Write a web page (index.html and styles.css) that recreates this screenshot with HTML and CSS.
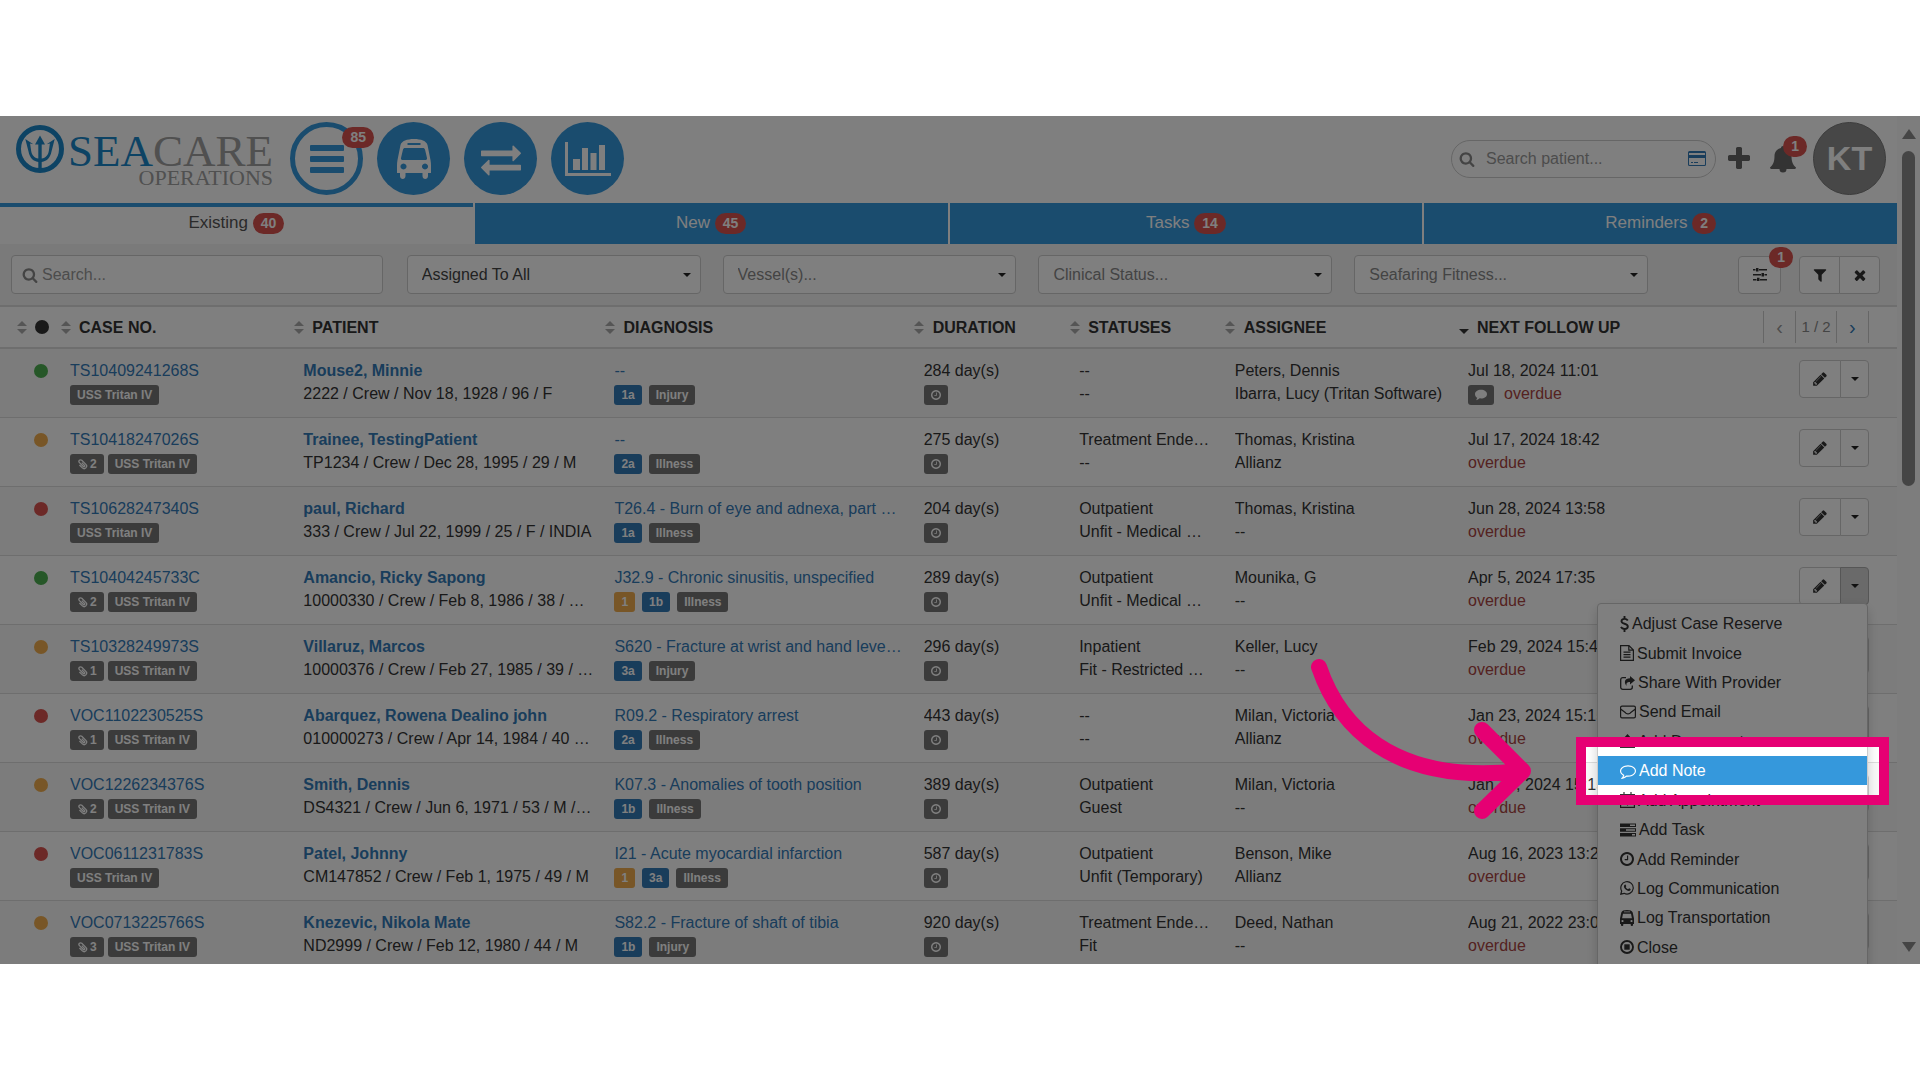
FILE: index.html
```html
<!DOCTYPE html>
<html lang="en">
<head>
  <meta charset="UTF-8" />
  <meta name="viewport" content="width=device-width, initial-scale=1.0" />
  <title>SeaCare Operations</title>
  <link rel="stylesheet" href="styles.css">
</head>
<body>

  <svg class="sprite" aria-hidden="true">
    <symbol id="i-search" viewBox="0 0 1792 1792"><path d="M1216 832q0-185-131.500-316.500t-316.500-131.500-316.500 131.500-131.500 316.500 131.500 316.500 316.500 131.500 316.500-131.500 131.500-316.500zm512 832q0 52-38 90t-90 38q-54 0-90-38l-343-342q-179 124-399 124-143 0-273.500-55.500t-225-150-150-225-55.500-273.500 55.500-273.500 150-225 225-150 273.500-55.500 273.500 55.500 225 150 150 225 55.500 273.500q0 220-124 399l343 343q37 37 37 90z"/></symbol>
    <symbol id="i-plus" viewBox="0 0 1792 1792"><path d="M1600 736v192q0 40-28 68t-68 28h-416v416q0 40-28 68t-68 28h-192q-40 0-68-28t-28-68v-416h-416q-40 0-68-28t-28-68v-192q0-40 28-68t68-28h416v-416q0-40 28-68t68-28h192q40 0 68 28t28 68v416h416q40 0 68 28t28 68z"/></symbol>
    <symbol id="i-filter" viewBox="0 0 1792 1792"><path d="M1595 295q17 41-14 70l-493 493v742q0 42-39 59-13 5-25 5-27 0-45-19l-256-256q-19-19-19-45v-486l-493-493q-31-29-14-70 17-39 59-39h1280q42 0 59 39z"/></symbol>
    <symbol id="i-times" viewBox="0 0 1792 1792"><path d="M1490 1322q0 40-28 68l-136 136q-28 28-68 28t-68-28l-294-294-294 294q-28 28-68 28t-68-28l-136-136q-28-28-28-68t28-68l294-294-294-294q-28-28-28-68t28-68l136-136q28-28 68-28t68 28l294 294 294-294q28-28 68-28t68 28l136 136q28 28 28 68t-28 68l-294 294 294 294q28 28 28 68z"/></symbol>
    <symbol id="i-pencil" viewBox="0 0 1792 1792"><path d="M491 1536l91-91-235-235-91 91v107h128v128h107zm523-928q0-22-22-22-10 0-17 7l-542 542q-7 7-7 17 0 22 22 22 10 0 17-7l542-542q7-7 7-17zm-54-192l416 416-832 832h-416v-416zm683 96q0 53-37 90l-166 166-416-416 166-165q36-38 90-38 53 0 91 38l235 234q37 39 37 91z"/></symbol>
    <symbol id="i-clock" viewBox="128 128 1536 1536"><path d="M1024 544v448q0 14-9 23t-23 9h-320q-14 0-23-9t-9-23v-64q0-14 9-23t23-9h224v-352q0-14 9-23t23-9h64q14 0 23 9t9 23zm416 352q0-148-73-273t-198-198-273-73-273 73-198 198-73 273 73 273 198 198 273 73 273-73 198-198 73-273zm224 0q0 209-103 385.500t-279.500 279.500-385.500 103-385.500-103-279.500-279.500-103-385.500 103-385.500 279.500-279.500 385.500-103 385.500 103 279.500 279.500 103 385.500z"/></symbol>
    <symbol id="i-comment-o" viewBox="0 0 1792 1792"><path d="M896 384q-204 0-381.500 69.500t-282 187.500-104.500 255q0 112 71.500 213.500t201.500 175.500l87 50-27 96q-24 91-70 172 152-63 275-171l43-38 57 6q69 8 130 8 204 0 381.500-69.500t282-187.500 104.500-255-104.500-255-282-187.500-381.500-69.500zm896 512q0 174-120 321.500t-326 233-450 85.500q-70 0-145-8-198 175-460 242-49 14-114 22h-5q-15 0-27-10.500t-16-27.500v-1q-3-4 0-12l6-19 21-26q7-8 31-34.500t34.500-38 31-39.500 32.500-51 27-59 26-76q-157-89-247.500-220t-90.500-281q0-130 71-248.500t191-204.500 286-136.500 348-50.500 348 50.500 286 136.500 191 204.500 71 248.500z"/></symbol>
    <symbol id="i-exchange" viewBox="0 0 1792 1792"><path d="M1792 1184v192q0 13-9.500 22.500t-22.500 9.500h-1376v192q0 13-9.500 22.500t-22.500 9.500q-12 0-24-10l-319-320q-9-9-9-22 0-14 9-23l320-320q9-9 23-9 13 0 22.500 9.500t9.500 22.500v192h1376q13 0 22.500 9.500t9.500 22.500zm0-544q0 14-9 23l-320 320q-9 9-23 9-13 0-22.500-9.500t-9.500-22.500v-192h-1376q-13 0-22.500-9.500t-9.500-22.500v-192q0-13 9.500-22.500t22.500-9.500h1376v-192q0-14 9-23t23-9q12 0 24 10l319 319q9 9 9 23z"/></symbol>
    <symbol id="i-bars" viewBox="0 0 34 28"><rect width="34" height="6" rx="1"/><rect y="11" width="34" height="6" rx="1"/><rect y="22" width="34" height="6" rx="1"/></symbol>
    <symbol id="i-bus" viewBox="0 0 34 40"><path fill-rule="evenodd" d="M17 0c7 0 12.500 2 13.500 6l3 15c.4 2 .5 4 .5 6v7h-3v3c0 4-5.500 4-5.500 0v-3h-17v3c0 4-5.500 4-5.500 0v-3H0v-7c0-2 .1-4 .5-6l3-15C4.500 2 10 0 17 0zM10.500 4v2h13V4zM8 9c-1 0-1.800.6-2 1.500L4 19c-.3 1.200.5 2 1.500 2h23c1 0 1.800-.8 1.500-2l-2-8.500c-.2-.9-1-1.500-2-1.500zM6.500 24.500a3 3 0 1 0 .01 0zM28 24.500a3 3 0 1 0 .01 0z"/></symbol>
    <symbol id="i-chart" viewBox="0 0 46 34"><path d="M0 0h3v31h43v3H0zM8 17h7v11H8zM17 6h6v22h-6zM25.500 11h6v17h-6zM34 3h6v25h-6z"/></symbol>
    <symbol id="i-bell" viewBox="0 0 26 28"><path d="M13 1c1.200 0 2 .8 2 2 4 .8 6.500 4 6.500 8 0 6 1.500 9 4.500 11.500 0 1-1 1.500-2 1.500h-7.500a3.500 3.500 0 0 1-7 0H2c-1 0-2-.5-2-1.500C3 20 4.500 17 4.500 11c0-4 2.500-7.200 6.500-8 0-1.200.8-2 2-2z"/></symbol>
    <symbol id="i-card" viewBox="0 0 18 15"><path fill-rule="evenodd" d="M1.500 0h15A1.500 1.500 0 0 1 18 1.500v12a1.500 1.500 0 0 1-1.500 1.500h-15A1.500 1.500 0 0 1 0 13.500v-12A1.500 1.500 0 0 1 1.500 0zM1 2v2h16V2zM1 7v6.500l.5.500h15l.5-.5V7zM3 11h2v1H3zM6 11h4v1H6z"/></symbol>
    <symbol id="i-sliders" viewBox="0 0 14 13"><path d="M0 1h2.500v1.500H0zM6 1h8v1.500H6zM3 0h2.500v3.500H3zM0 6h8v1.500H0zM11.500 6H14v1.500h-2.500zM8.500 5H11v3.500H8.500zM0 11h3.500v1.500H0zM7 11h7v1.500H7zM4 9.800h2.500V13H4z"/></symbol>
    <symbol id="i-clip" viewBox="0 0 12 12"><g transform="rotate(-45 6 6)" fill="none" stroke="currentColor" stroke-width="1.400"><path d="M3.300 4v4.500a2.700 2.700 0 0 0 5.400 0V2.200a1.800 1.800 0 0 0-3.600 0v6a.9.9 0 0 0 1.800 0V4"/></g></symbol>
    <symbol id="i-comment" viewBox="0 0 14 12"><path d="M7 0c3.900 0 7 2.200 7 5s-3.100 5-7 5c-.6 0-1.100 0-1.600-.1C4.200 11 2.800 11.700 1.200 12c.7-.8 1.200-1.700 1.400-2.800C1 8.200 0 6.700 0 5c0-2.800 3.100-5 7-5z"/></symbol>
    <symbol id="i-dollar" viewBox="0 0 9 16"><path fill="none" stroke="currentColor" stroke-width="1.900" d="M7.800 4.600C7 3.300 5.900 2.900 4.500 2.900 2.700 2.900 1.500 3.800 1.500 5.200 1.500 8.600 7.800 6.900 7.800 10.500c0 1.500-1.400 2.500-3.300 2.500-1.500 0-2.800-.6-3.600-1.900M4.500 0v3M4.500 13v3"/></symbol>
    <symbol id="i-file" viewBox="0 0 14 16"><path fill="none" stroke="currentColor" stroke-width="1.200" d="M.6.6h8.400l4.400 4.400v10.400H.6zM8.800.6v4.600h4.600M3.500 7.200h7M3.500 9.700h7M3.500 12.200h7"/></symbol>
    <symbol id="i-share" viewBox="0 0 15 14"><path fill="none" stroke="currentColor" stroke-width="1.300" d="M6 1.700H2.800A2.100 2.100 0 0 0 .7 3.800v7.400a2.100 2.100 0 0 0 2.100 2.100h7.400a2.100 2.100 0 0 0 2.100-2.100V9.500"/><path d="M10 0L15 4.200l-5 4.200V6C7.500 5.900 6 6.700 6.600 10 3.600 6.500 4.500 2.300 10 2.300z"/></symbol>
    <symbol id="i-envelope" viewBox="0 0 16 13"><path fill="none" stroke="currentColor" stroke-width="1.200" d="M2 .6h12A1.400 1.400 0 0 1 15.400 2v9a1.400 1.400 0 0 1-1.400 1.400H2A1.400 1.400 0 0 1 .6 11V2A1.400 1.400 0 0 1 2 .6zM.6 3.500C3 5.500 4.500 6.500 6 7.700q2 1.400 4 0C11.500 6.500 13 5.500 15.400 3.500"/></symbol>
    <symbol id="i-upload" viewBox="0 0 15 14"><path d="M7.500 0L12 5H9v5H6V5H3zM0 9h4.500v2h6V9H15v5H0z"/></symbol>
    <symbol id="i-calendar" viewBox="0 0 15 16"><path fill="none" stroke="currentColor" stroke-width="1.200" d="M.6 2.600h13.800v12.800H.6zM.6 6h13.800M4 0v4.500M11 0v4.500M7.500 8v5.500M4.800 10.700h5.400"/></symbol>
    <symbol id="i-tasks" viewBox="0 0 16 13"><path fill-rule="evenodd" d="M0 0h16v3.500H0zM10 1v1.500h5V1zM0 4.700h16v3.500H0zM6 5.700v1.500h9V5.700zM0 9.500h16V13H0zM12 10.500V12h3v-1.500z"/></symbol>
    <symbol id="i-whatsapp" viewBox="0 0 14 14"><path fill="none" stroke="currentColor" stroke-width="1.200" d="M.8 13.200l.9-3.200a6.200 6.200 0 1 1 2.400 2.300z"/><path d="M4.200 4.200c1-1.300 1.500-.6 2.100.9 0 .5-.7.800-.5 1.200.5.900 1.200 1.500 2.200 1.900.5 0 .8-1 1.200-.9 1.500.6 1.800.9 1.200 1.900-.9 1-2.300.9-4-.2C4.500 7.700 3.300 5.700 4.200 4.200z"/></symbol>
    <symbol id="i-car" viewBox="0 0 14 16"><path fill-rule="evenodd" d="M7 0c3 0 5.300.8 5.700 2.500L14 8.500V14h-1v1c0 1.300-2.300 1.300-2.300 0v-1H3.300v1C3.300 16.300 1 16.300 1 15v-1H0V8.500l1.300-6C1.700.8 4 0 7 0zM4 1.500v.8h6v-.8zM3 3.700l-.9 4.500h9.800L11 3.700zM2.500 9.900a1.100 1.100 0 1 0 .01 0zM11.500 9.900a1.100 1.100 0 1 0 .01 0z"/></symbol>
    <symbol id="i-stop" viewBox="0 0 14 14"><circle cx="7" cy="7" r="6" fill="none" stroke="currentColor" stroke-width="1.900"/><rect x="4.300" y="4.300" width="5.400" height="5.400"/></symbol>
  </svg>

  <div class="app">
    <div class="content">

      <header class="header">
        <a class="logo" href="#" aria-label="SeaCare Operations">
          <svg class="trident" viewBox="0 0 48 48">
            <circle cx="24" cy="24" r="21.500" fill="none" stroke="currentColor" stroke-width="5"/>
            <path d="M24 10.500l5 9h-3.300V33.500c4-.5 6.500-3.200 7.200-8l1-7-3.200.7 8-5.200-3.200 12.500c-1.200 6-4.300 9.700-9.800 10.500V46h-3.400V37c-5.500-.8-8.600-4.500-9.800-10.500L9.300 14l8 5.200-3.200-.7 1 7c.7 4.800 3.200 7.500 7.200 8V19.500H19z"/>
          </svg>
          <span class="wordmark">
            <span class="brand"><span class="sea">SEA</span>CARE</span>
            <span class="product">OPERATIONS</span>
          </span>
        </a>

        <nav class="modules">
          <a class="module active" href="#" aria-label="Cases"><svg class="icon-bars"><use href="#i-bars"/></svg><span class="badge">85</span></a>
          <a class="module" href="#" aria-label="Transportation"><svg class="icon-bus"><use href="#i-bus"/></svg></a>
          <a class="module" href="#" aria-label="Transfers"><svg class="icon-exchange"><use href="#i-exchange"/></svg></a>
          <a class="module" href="#" aria-label="Reports"><svg class="icon-chart"><use href="#i-chart"/></svg></a>
        </nav>

        <div class="tools">
          <label class="patient-search">
            <svg class="icon-16"><use href="#i-search"/></svg>
            <input type="text" placeholder="Search patient..." aria-label="Search patient">
            <svg class="icon-card"><use href="#i-card"/></svg>
          </label>
          <button class="tool plus" type="button" aria-label="Add"><svg><use href="#i-plus"/></svg></button>
          <button class="tool bell" type="button" aria-label="Notifications"><svg><use href="#i-bell"/></svg><span class="badge">1</span></button>
          <button class="avatar" type="button">KT</button>
        </div>
      </header>

      <nav class="tabs">
        <a class="tab active" href="#">Existing <span class="badge">40</span></a>
        <a class="tab" href="#">New <span class="badge">45</span></a>
        <a class="tab" href="#">Tasks <span class="badge">14</span></a>
        <a class="tab" href="#">Reminders <span class="badge">2</span></a>
      </nav>

      <form class="filters">
        <label class="field search">
          <svg class="icon-16"><use href="#i-search"/></svg>
          <input type="text" placeholder="Search..." aria-label="Search">
        </label>
        <div class="field select filled"><select aria-label="Assigned to"><option>Assigned To All</option></select></div>
        <div class="field select"><select aria-label="Vessels"><option>Vessel(s)...</option></select></div>
        <div class="field select"><select aria-label="Clinical status"><option>Clinical Status...</option></select></div>
        <div class="field select"><select aria-label="Seafaring fitness"><option>Seafaring Fitness...</option></select></div>
        <div class="filter-actions">
          <div class="btn-group settings">
            <button class="btn" type="button" aria-label="Settings"><svg class="icon-sliders"><use href="#i-sliders"/></svg></button>
            <span class="badge">1</span>
          </div>
          <div class="btn-group">
            <button class="btn" type="button" aria-label="Filter"><svg class="icon-16"><use href="#i-filter"/></svg></button>
            <button class="btn" type="button" aria-label="Clear"><svg class="icon-16"><use href="#i-times"/></svg></button>
          </div>
        </div>
      </form>

      <table class="cases">
        <colgroup>
          <col class="c-dot"><col class="c-case"><col class="c-patient"><col class="c-diagnosis"><col class="c-duration"><col class="c-status"><col class="c-assignee"><col class="c-next"><col class="c-actions">
        </colgroup>
        <thead>
          <tr>
            <th class="first"><span class="th"><i class="sort"></i><span class="dot black"></span></span></th>
            <th><span class="th"><i class="sort"></i>CASE NO.</span></th>
            <th><span class="th"><i class="sort"></i>PATIENT</span></th>
            <th><span class="th"><i class="sort"></i>DIAGNOSIS</span></th>
            <th><span class="th"><i class="sort"></i>DURATION</span></th>
            <th><span class="th"><i class="sort"></i>STATUSES</span></th>
            <th><span class="th"><i class="sort"></i>ASSIGNEE</span></th>
            <th><span class="th"><i class="sort desc"></i>NEXT FOLLOW UP</span></th>
            <th class="pager-cell">
              <div class="pager">
                <button type="button" aria-label="Previous page" disabled>‹</button>
                <span>1 / 2</span>
                <button type="button" aria-label="Next page">›</button>
              </div>
            </th>
          </tr>
        </thead>
        <tbody>
          <tr>
            <td><span class="dot green"></span></td>
            <td><a href="#">TS10409241268S</a><div class="labels"><span class="label">USS Tritan IV</span></div></td>
            <td><a class="name" href="#">Mouse2, Minnie</a><p>2222 / Crew / Nov 18, 1928 / 96 / F</p></td>
            <td><a href="#">--</a><div class="labels wide"><span class="label blue">1a</span><span class="label">Injury</span></div></td>
            <td><p>284 day(s)</p><div class="labels"><span class="label"><svg class="icon-10"><use href="#i-clock"/></svg></span></div></td>
            <td><p>--</p><p>--</p></td>
            <td><p>Peters, Dennis</p><p>Ibarra, Lucy (Tritan Software)</p></td>
            <td><p>Jul 18, 2024 11:01</p><div class="labels note"><span class="label"><svg class="icon-comment"><use href="#i-comment"/></svg></span><span class="overdue">overdue</span></div></td>
            <td><div class="btn-group row-actions"><button class="btn" type="button" aria-label="Edit"><svg class="icon-16"><use href="#i-pencil"/></svg></button><button class="btn toggle" type="button" aria-label="More"></button></div></td>
          </tr>
          <tr>
            <td><span class="dot orange"></span></td>
            <td><a href="#">TS10418247026S</a><div class="labels"><span class="label"><svg class="icon-11"><use href="#i-clip"/></svg>2</span><span class="label">USS Tritan IV</span></div></td>
            <td><a class="name" href="#">Trainee, TestingPatient</a><p>TP1234 / Crew / Dec 28, 1995 / 29 / M</p></td>
            <td><a href="#">--</a><div class="labels wide"><span class="label blue">2a</span><span class="label">Illness</span></div></td>
            <td><p>275 day(s)</p><div class="labels"><span class="label"><svg class="icon-10"><use href="#i-clock"/></svg></span></div></td>
            <td><p>Treatment Ended Early</p><p>--</p></td>
            <td><p>Thomas, Kristina</p><p>Allianz</p></td>
            <td><p>Jul 17, 2024 18:42</p><p class="overdue">overdue</p></td>
            <td><div class="btn-group row-actions"><button class="btn" type="button" aria-label="Edit"><svg class="icon-16"><use href="#i-pencil"/></svg></button><button class="btn toggle" type="button" aria-label="More"></button></div></td>
          </tr>
          <tr>
            <td><span class="dot red"></span></td>
            <td><a href="#">TS10628247340S</a><div class="labels"><span class="label">USS Tritan IV</span></div></td>
            <td><a class="name" href="#">paul, Richard</a><p>333 / Crew / Jul 22, 1999 / 25 / F / INDIA</p></td>
            <td><a href="#">T26.4 - Burn of eye and adnexa, part unspecified</a><div class="labels wide"><span class="label blue">1a</span><span class="label">Illness</span></div></td>
            <td><p>204 day(s)</p><div class="labels"><span class="label"><svg class="icon-10"><use href="#i-clock"/></svg></span></div></td>
            <td><p>Outpatient</p><p>Unfit - Medical Signoff</p></td>
            <td><p>Thomas, Kristina</p><p>--</p></td>
            <td><p>Jun 28, 2024 13:58</p><p class="overdue">overdue</p></td>
            <td><div class="btn-group row-actions"><button class="btn" type="button" aria-label="Edit"><svg class="icon-16"><use href="#i-pencil"/></svg></button><button class="btn toggle" type="button" aria-label="More"></button></div></td>
          </tr>
          <tr>
            <td><span class="dot green"></span></td>
            <td><a href="#">TS10404245733C</a><div class="labels"><span class="label"><svg class="icon-11"><use href="#i-clip"/></svg>2</span><span class="label">USS Tritan IV</span></div></td>
            <td><a class="name" href="#">Amancio, Ricky Sapong</a><p>10000330 / Crew / Feb 8, 1986 / 38 / M / PHILIPPINES</p></td>
            <td><a href="#">J32.9 - Chronic sinusitis, unspecified</a><div class="labels wide"><span class="label orange">1</span><span class="label blue">1b</span><span class="label">Illness</span></div></td>
            <td><p>289 day(s)</p><div class="labels"><span class="label"><svg class="icon-10"><use href="#i-clock"/></svg></span></div></td>
            <td><p>Outpatient</p><p>Unfit - Medical Signoff</p></td>
            <td><p>Mounika, G</p><p>--</p></td>
            <td><p>Apr 5, 2024 17:35</p><p class="overdue">overdue</p></td>
            <td class="open">
              <div class="btn-group row-actions">
                <button class="btn" type="button" aria-label="Edit"><svg class="icon-16"><use href="#i-pencil"/></svg></button><button class="btn toggle pressed" type="button" aria-label="More" aria-expanded="true"></button>
                <ul class="menu">
                  <li><a href="#"><svg class="w-9"><use href="#i-dollar"/></svg>Adjust Case Reserve</a></li>
                  <li><a href="#"><svg class="w-14"><use href="#i-file"/></svg>Submit Invoice</a></li>
                  <li><a href="#"><svg class="w-15"><use href="#i-share"/></svg>Share With Provider</a></li>
                  <li><a href="#"><svg class="w-16"><use href="#i-envelope"/></svg>Send Email</a></li>
                  <li><a href="#"><svg class="w-15"><use href="#i-upload"/></svg>Add Document</a></li>
                  <li><a class="current" href="#"><svg class="w-16"><use href="#i-comment-o"/></svg>Add Note</a></li>
                  <li><a href="#"><svg class="w-15"><use href="#i-calendar"/></svg>Add Appointment</a></li>
                  <li><a href="#"><svg class="w-16"><use href="#i-tasks"/></svg>Add Task</a></li>
                  <li><a href="#"><svg class="w-14"><use href="#i-clock"/></svg>Add Reminder</a></li>
                  <li><a href="#"><svg class="w-14"><use href="#i-whatsapp"/></svg>Log Communication</a></li>
                  <li><a href="#"><svg class="w-14"><use href="#i-car"/></svg>Log Transportation</a></li>
                  <li><a href="#"><svg class="w-14"><use href="#i-stop"/></svg>Close</a></li>
                </ul>
              </div>
            </td>
          </tr>
          <tr>
            <td><span class="dot orange"></span></td>
            <td><a href="#">TS10328249973S</a><div class="labels"><span class="label"><svg class="icon-11"><use href="#i-clip"/></svg>1</span><span class="label">USS Tritan IV</span></div></td>
            <td><a class="name" href="#">Villaruz, Marcos</a><p>10000376 / Crew / Feb 27, 1985 / 39 / M / PHILIPPINES</p></td>
            <td><a href="#">S620 - Fracture at wrist and hand level, closed</a><div class="labels wide"><span class="label blue">3a</span><span class="label">Injury</span></div></td>
            <td><p>296 day(s)</p><div class="labels"><span class="label"><svg class="icon-10"><use href="#i-clock"/></svg></span></div></td>
            <td><p>Inpatient</p><p>Fit - Restricted Duty</p></td>
            <td><p>Keller, Lucy</p><p>--</p></td>
            <td><p>Feb 29, 2024 15:45</p><p class="overdue">overdue</p></td>
            <td><div class="btn-group row-actions"><button class="btn" type="button" aria-label="Edit"><svg class="icon-16"><use href="#i-pencil"/></svg></button><button class="btn toggle" type="button" aria-label="More"></button></div></td>
          </tr>
          <tr>
            <td><span class="dot red"></span></td>
            <td><a href="#">VOC1102230525S</a><div class="labels"><span class="label"><svg class="icon-11"><use href="#i-clip"/></svg>1</span><span class="label">USS Tritan IV</span></div></td>
            <td><a class="name" href="#">Abarquez, Rowena Dealino john</a><p>010000273 / Crew / Apr 14, 1984 / 40 / F / PHILIPPINES</p></td>
            <td><a href="#">R09.2 - Respiratory arrest</a><div class="labels wide"><span class="label blue">2a</span><span class="label">Illness</span></div></td>
            <td><p>443 day(s)</p><div class="labels"><span class="label"><svg class="icon-10"><use href="#i-clock"/></svg></span></div></td>
            <td><p>--</p><p>--</p></td>
            <td><p>Milan, Victoria</p><p>Allianz</p></td>
            <td><p>Jan 23, 2024 15:15</p><p class="overdue">overdue</p></td>
            <td><div class="btn-group row-actions"><button class="btn" type="button" aria-label="Edit"><svg class="icon-16"><use href="#i-pencil"/></svg></button><button class="btn toggle" type="button" aria-label="More"></button></div></td>
          </tr>
          <tr>
            <td><span class="dot orange"></span></td>
            <td><a href="#">VOC1226234376S</a><div class="labels"><span class="label"><svg class="icon-11"><use href="#i-clip"/></svg>2</span><span class="label">USS Tritan IV</span></div></td>
            <td><a class="name" href="#">Smith, Dennis</a><p>DS4321 / Crew / Jun 6, 1971 / 53 / M / USA</p></td>
            <td><a href="#">K07.3 - Anomalies of tooth position</a><div class="labels wide"><span class="label blue">1b</span><span class="label">Illness</span></div></td>
            <td><p>389 day(s)</p><div class="labels"><span class="label"><svg class="icon-10"><use href="#i-clock"/></svg></span></div></td>
            <td><p>Outpatient</p><p>Guest</p></td>
            <td><p>Milan, Victoria</p><p>--</p></td>
            <td><p>Jan 23, 2024 15:15</p><p class="overdue">overdue</p></td>
            <td><div class="btn-group row-actions"><button class="btn" type="button" aria-label="Edit"><svg class="icon-16"><use href="#i-pencil"/></svg></button><button class="btn toggle" type="button" aria-label="More"></button></div></td>
          </tr>
          <tr>
            <td><span class="dot red"></span></td>
            <td><a href="#">VOC0611231783S</a><div class="labels"><span class="label">USS Tritan IV</span></div></td>
            <td><a class="name" href="#">Patel, Johnny</a><p>CM147852 / Crew / Feb 1, 1975 / 49 / M</p></td>
            <td><a href="#">I21 - Acute myocardial infarction</a><div class="labels wide"><span class="label orange">1</span><span class="label blue">3a</span><span class="label">Illness</span></div></td>
            <td><p>587 day(s)</p><div class="labels"><span class="label"><svg class="icon-10"><use href="#i-clock"/></svg></span></div></td>
            <td><p>Outpatient</p><p>Unfit (Temporary)</p></td>
            <td><p>Benson, Mike</p><p>Allianz</p></td>
            <td><p>Aug 16, 2023 13:20</p><p class="overdue">overdue</p></td>
            <td><div class="btn-group row-actions"><button class="btn" type="button" aria-label="Edit"><svg class="icon-16"><use href="#i-pencil"/></svg></button><button class="btn toggle" type="button" aria-label="More"></button></div></td>
          </tr>
          <tr>
            <td><span class="dot orange"></span></td>
            <td><a href="#">VOC0713225766S</a><div class="labels"><span class="label"><svg class="icon-11"><use href="#i-clip"/></svg>3</span><span class="label">USS Tritan IV</span></div></td>
            <td><a class="name" href="#">Knezevic, Nikola Mate</a><p>ND2999 / Crew / Feb 12, 1980 / 44 / M</p></td>
            <td><a href="#">S82.2 - Fracture of shaft of tibia</a><div class="labels wide"><span class="label blue">1b</span><span class="label">Injury</span></div></td>
            <td><p>920 day(s)</p><div class="labels"><span class="label"><svg class="icon-10"><use href="#i-clock"/></svg></span></div></td>
            <td><p>Treatment Ended Early</p><p>Fit</p></td>
            <td><p>Deed, Nathan</p><p>--</p></td>
            <td><p>Aug 21, 2022 23:00</p><p class="overdue">overdue</p></td>
            <td><div class="btn-group row-actions"><button class="btn" type="button" aria-label="Edit"><svg class="icon-16"><use href="#i-pencil"/></svg></button><button class="btn toggle" type="button" aria-label="More"></button></div></td>
          </tr>
        </tbody>
      </table>
    </div>

    <div class="scrollbar">
      <span class="arrow up"></span>
      <span class="track"><span class="thumb"></span></span>
      <span class="arrow down"></span>
    </div>

    <!-- guide layer: dims everything except the highlighted menu item -->
    <div class="spotlight"></div>
    <svg class="pointer" viewBox="0 0 222 98" aria-hidden="true">
      <path d="M9 9C28 65 80 128 211 113M172 72L213 113L172 153"/>
    </svg>
  </div>

</body>
</html>
```

FILE: styles.css
```css
* {
  box-sizing: border-box;
}

body {
  margin: 0;
  padding: 116px 0;
  height: 100vh;
  background: #fff;
  color: #333;
  font-family: "Liberation Sans", Arial, sans-serif;
  font-size: 16px;
  line-height: 23px;
}

a {
  color: #337ab7;
  text-decoration: none;
}

p {
  margin: 0;
}

button, input, select {
  font: inherit;
  color: inherit;
}

svg {
  display: block;
  flex: none;
  fill: currentColor;
}

.sprite {
  position: absolute;
  width: 0;
  height: 0;
}

.app {
  position: relative;
  display: flex;
  height: 100%;
  overflow: hidden;
}

.content {
  flex: 1;
  min-width: 0;
}

.badge {
  display: inline-block;
  padding: 0 8px;
  border-radius: 11px;
  background: #d9534f;
  color: #fff;
  font-size: 14px;
  font-weight: bold;
  line-height: 21px;
}

/* header */
.header {
  display: flex;
  align-items: flex-start;
  height: 87px;
  padding: 6px 11px 0 16px;
}

.logo {
  display: flex;
  gap: 4px;
  margin-right: 17px;
  color: #1a87c9;
}

.trident {
  width: 48px;
  height: 48px;
  margin-top: 3px;
}

.wordmark {
  display: flex;
  flex-direction: column;
  align-items: flex-end;
  margin-top: 9px;
  font-family: "Liberation Serif", "Times New Roman", serif;
  color: #a0a0a0;
}

.brand {
  font-size: 45px;
  line-height: 40px;
}

.sea {
  color: #1a87c9;
}

.product {
  font-size: 22px;
  line-height: 14px;
}

.modules {
  display: flex;
  gap: 14px;
}

.module {
  position: relative;
  display: flex;
  align-items: center;
  justify-content: center;
  width: 73px;
  height: 73px;
  border-radius: 50%;
  background: #3598dc;
  color: #fff;
}

.module.active {
  border: 5px solid #3598dc;
  background: #fff;
  color: #3598dc;
}

.module .badge {
  position: absolute;
  top: 0;
  right: -16px;
}

.icon-bars { width: 34px; height: 28px; }
.icon-bus { width: 34px; height: 40px; }
.icon-exchange { width: 40px; height: 40px; }
.icon-chart { width: 46px; height: 34px; }
.icon-card { width: 18px; height: 15px; color: #337ab7; }
.icon-sliders { width: 14px; height: 13px; }
.icon-comment { width: 12px; height: 12px; }
.icon-10 { width: 10px; height: 10px; }
.icon-11 { width: 11px; height: 11px; }
.icon-16 { width: 16px; height: 16px; }

.tools {
  display: flex;
  align-items: center;
  height: 73px;
  margin-left: auto;
}

.patient-search {
  display: flex;
  align-items: center;
  gap: 11px;
  width: 265px;
  height: 38px;
  padding: 0 9px 0 7px;
  border: 1px solid #ccc;
  border-radius: 19px;
  color: #888;
}

input {
  flex: 1;
  min-width: 0;
  padding: 0;
  border: 0;
  outline: 0;
  background: none;
}

input::placeholder {
  color: #999;
  opacity: 1;
}

.tool {
  position: relative;
  padding: 0;
  border: 0;
  background: none;
  color: #666;
}

.plus svg {
  width: 28px;
  height: 28px;
}

.plus {
  margin-left: 9px;
}

.bell {
  margin: 0 17px;
}

.bell svg {
  width: 26px;
  height: 28px;
}

.bell .badge {
  position: absolute;
  top: -9px;
  right: -11px;
}

.avatar {
  width: 73px;
  height: 73px;
  padding: 0;
  border: 1px solid #777;
  border-radius: 50%;
  background: #8f8f8f;
  color: #fff;
  font-size: 34px;
  font-weight: bold;
}

/* tabs */
.tabs {
  display: grid;
  grid-template-columns: repeat(4, 1fr);
  gap: 2px;
}

.tab {
  height: 41px;
  border-top: 4px solid #3598dc;
  background: #3598dc;
  color: #fff;
  font-size: 17px;
  line-height: 32px;
  text-align: center;
}

.tab.active {
  background: #fff;
  color: #555;
}

/* filters */
.filters {
  display: flex;
  align-items: center;
  gap: 22px;
  height: 63px;
  padding: 0 17px 0 11px;
  border-bottom: 2px solid #ddd;
  background: #f5f5f5;
}

/* flex numbers are the inner widths, without border and padding */
.field {
  position: relative;
  display: flex;
  align-items: center;
  flex: 292;
  height: 39px;
  border: 1px solid #ccc;
  border-radius: 4px;
  background: #fff;
  color: #888;
}

.field.search {
  flex: 350;
  gap: 4px;
  margin-right: 2px;
  padding: 0 10px;
}

.field.filled {
  color: #444;
}

.field select {
  width: 100%;
  height: 100%;
  padding: 0 14px;
  border: 0;
  outline: 0;
  background: none;
  appearance: none;
}

.select::after,
.toggle::after {
  content: "";
  border: 4px solid transparent;
  border-top-color: #222;
  border-bottom: 0;
}

.select::after {
  position: absolute;
  right: 9px;
}

.filter-actions {
  display: flex;
  gap: 18px;
  margin-left: 68px;
}

.btn-group {
  position: relative;
  display: flex;
  height: 38px;
}

.btn {
  display: flex;
  align-items: center;
  justify-content: center;
  width: 41px;
  padding: 0;
  border: 1px solid #ccc;
  background: #fff;
  color: #333;
}

.btn + .btn {
  margin-left: -1px;
}

.btn:first-of-type {
  border-radius: 4px 0 0 4px;
}

.btn:last-of-type {
  border-radius: 0 4px 4px 0;
}

.settings .btn {
  width: 43px;
  border-radius: 4px;
}

.settings .badge {
  position: absolute;
  top: -9px;
  right: -12px;
}

/* case list */
.cases {
  width: 100%;
  border-collapse: separate;
  border-spacing: 0;
  table-layout: fixed;
}

.c-dot { width: 58px; }
.c-case { width: 12.3%; }
.c-patient { width: 16.4%; }
.c-diagnosis { width: 16.3%; }
.c-duration { width: 8.2%; }
.c-status { width: 8.2%; }
.c-assignee { width: 12.3%; }
.c-actions { width: 154px; }

.cases th {
  height: 42px;
  padding: 0 0 0 3px;
  border-bottom: 2px solid #ddd;
  text-align: left;
}

.cases th.first {
  padding-left: 17px;
}

.th {
  display: flex;
  align-items: center;
  gap: 9px;
  white-space: nowrap;
}

.sort {
  display: flex;
  flex-direction: column;
  align-items: center;
  gap: 3px;
  width: 9px;
}

.sort::before,
.sort::after {
  content: "";
  border: 5px solid transparent;
}

.sort::before {
  border-top: 0;
  border-bottom-color: #aaa;
}

.sort::after {
  border-bottom: 0;
  border-top-color: #aaa;
}

.sort.desc::before {
  border-bottom-color: transparent;
}

.sort.desc::after {
  border-top-color: #333;
}

.pager-cell .pager {
  display: flex;
  width: 106px;
  height: 32px;
  margin: 0 28px 0 auto;
  border-left: 1px solid #ccc;
  color: #888;
  font-weight: normal;
  font-size: 15px;
  line-height: 32px;
  text-align: center;
}

.pager > * {
  flex: 32;
  padding: 0;
  border: 0;
  border-right: 1px solid #ccc;
  background: none;
}

.pager span {
  flex: 41;
}

.pager button {
  font-size: 20px;
}

.pager button:last-child {
  color: #337ab7;
}

.pager button:disabled {
  color: #999;
}

.cases td {
  height: 69px;
  padding: 10px 12px 12px;
  border-bottom: 1px solid #ddd;
  vertical-align: top;
}

.cases tbody tr:nth-child(odd) {
  background: #f9f9f9;
}

.cases td:first-child {
  padding: 15px 10px 0 34px;
}

.cases td:nth-child(3) {
  padding-right: 9px;
}

.cases td:nth-child(4) {
  padding-right: 8px;
}

.cases td:nth-child(7) {
  padding-right: 0;
}

.cases td:last-child {
  padding: 11px 28px 0 0;
}

.cases td > a,
.cases td > p {
  display: block;
  overflow: hidden;
  text-overflow: ellipsis;
  white-space: nowrap;
}

.cases .name {
  font-weight: bold;
}

.dot {
  display: block;
  width: 14px;
  height: 14px;
  border-radius: 50%;
}

.dot.black { background: #333; }
.dot.green { background: #4caf50; }
.dot.orange { background: #f0ad4e; }
.dot.red { background: #d9534f; }

.labels {
  display: flex;
  gap: 4px;
  padding-top: 3px;
}

.labels.wide {
  gap: 7px;
}

.labels.note {
  gap: 10px;
}

.label {
  display: flex;
  align-items: center;
  gap: 2px;
  height: 20px;
  padding: 0 7px;
  border-radius: 3px;
  background: #777;
  color: #fff;
  font-size: 12px;
  font-weight: bold;
  line-height: 18px;
  white-space: nowrap;
}

.label.blue { background: #337ab7; }
.label.orange { background: #f0ad4e; }

.overdue {
  color: #a94442;
}

.labels .overdue {
  line-height: 18px;
}

.row-actions {
  width: 70px;
  margin-left: auto;
}

.row-actions .btn {
  width: 42px;
}

.row-actions .btn.toggle {
  width: 29px;
}

.btn.pressed {
  border-color: #adadad;
  background: #d4d4d4;
}

.menu {
  position: absolute;
  z-index: 2;
  top: 36px;
  right: 1px;
  display: grid;
  grid-auto-rows: 1fr;
  width: 271px;
  height: 365px;
  margin: 0;
  padding: 5px 0;
  border: 1px solid #ccc;
  border-radius: 4px;
  background: #fff;
  box-shadow: 0 6px 12px rgba(0, 0, 0, .18);
  list-style: none;
}

.menu a {
  display: flex;
  align-items: center;
  gap: 3px;
  height: 100%;
  padding: 0 22px;
  color: #333;
  white-space: nowrap;
}

.menu a.current {
  background: #3598dc;
  color: #fff;
}

.menu svg {
  height: 16px;
}

.w-9 { width: 9px; }
.w-14 { width: 14px; }
.w-15 { width: 15px; }
.w-16 { width: 16px; }

/* window scrollbar */
.scrollbar {
  display: flex;
  flex-direction: column;
  align-items: center;
  width: 23px;
  padding: 13px 0 12px;
  background: #fafafa;
}

.arrow {
  border: 7px solid transparent;
}

.arrow.up {
  border-top: 0;
  border-bottom: 10px solid #8b8b8b;
}

.arrow.down {
  border-bottom: 0;
  border-top: 10px solid #8b8b8b;
}

.track {
  flex: 1;
  width: 13px;
  margin: 12px 0;
}

.thumb {
  display: block;
  height: 43%;
  border-radius: 7px;
  background: #8b8b8b;
}

/* guide layer */
.spotlight {
  position: absolute;
  z-index: 5;
  top: 621px;
  right: 31px;
  width: 313px;
  height: 68px;
  border: 10px solid #e60073;
  box-shadow: 0 0 0 2000px rgba(0, 0, 0, .5);
}

.pointer {
  position: absolute;
  z-index: 6;
  top: 542px;
  right: 388px;
  width: 222px;
  height: 98px;
  overflow: visible;
  fill: none;
  stroke: #e60073;
  stroke-width: 16px;
  stroke-linecap: round;
  stroke-linejoin: round;
}
```
